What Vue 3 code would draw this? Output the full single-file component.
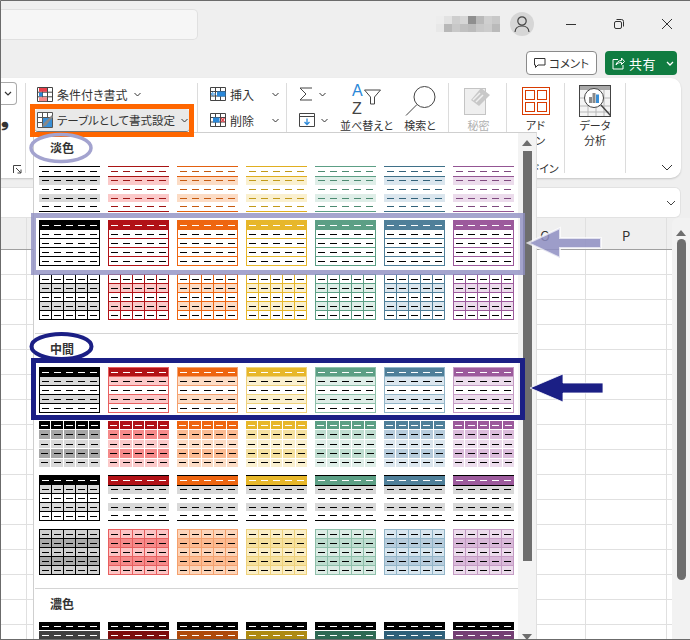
<template>
  <div class="page">
    <!-- タイトルバー -->
    <header class="titlebar">
      <div class="search"></div>
      <div class="user">
        <div class="mosaic">
          <i v-for="(c, i) in mosaic" :key="i" :style="{ background: c }"></i>
        </div>
        <div class="avatar">
          <svg width="16" height="18" viewBox="0 0 16 18" fill="none" stroke="#444" stroke-width="1.2">
            <circle cx="8" cy="6" r="4.2" />
            <path d="M1 17c.3-4 3-6 7-6s6.700 2 7 6" />
          </svg>
        </div>
      </div>
      <div class="winbtns">
        <svg width="12" height="12" viewBox="0 0 12 12" stroke="#333" fill="none"><path d="M1 6.500h10" /></svg>
        <svg width="12" height="12" viewBox="0 0 12 12" stroke="#333" fill="none">
          <rect x="1.500" y="3.500" width="7" height="7" rx="1.500" />
          <path d="M3.500 1.500h5a2 2 0 0 1 2 2v5" />
        </svg>
        <svg width="12" height="12" viewBox="0 0 12 12" stroke="#333" fill="none"><path d="M1 1l10 10M11 1L1 11" /></svg>
      </div>
    </header>

    <div class="actions">
      <button class="comment">
        <svg width="12" height="12" viewBox="0 0 12 12" fill="none" stroke="#333"><path d="M.5 1.500h10.500v6.500H4L1.500 10.500V8h-1z" /></svg>
        <span class="comment-text">コメント</span>
      </button>
      <button class="share">
        <svg width="13" height="13" viewBox="0 0 13 13" fill="none" stroke="#fff"><path d="M6 2.500H1v9.500h10V8M4 8c.5-3 3-4.500 5.500-4.500V1l3 3.500-3 3V5.500C7 5.500 5.200 6.300 4 8z" /></svg>
        <span class="share-text">共有</span>
        <svg class="share-chev" width="8" height="5" viewBox="0 0 8 5" fill="none" stroke="#fff" stroke-width="1.300"><path d="M1 1l3 3 3-3" /></svg>
      </button>
    </div>

    <!-- リボン -->
    <section class="ribbon">
      <div class="group g-font">
        <div class="combo">
          <svg width="8" height="5" viewBox="0 0 8 5" fill="none" stroke="#333" stroke-width="1.200"><path d="M1 1l3 3 3-3" /></svg>
        </div>
        <span class="comma">❟</span>
        <svg class="launcher" width="9" height="9" viewBox="0 0 9 9" fill="none" stroke="#444"><path d="M.5 8V.5H8M3 3l5 5M8 4.500V8H4.500" /></svg>
      </div>

      <div class="group g-style">
        <div class="style-row">
          <svg width="16" height="15" viewBox="0 0 16 15">
            <path d="M.5.500h15v14H.500z M.5 5.200h15M.5 9.800h15M5.500.500v14M10.500.500v14" fill="#fff" stroke="#444" />
            <rect x="2" y="1" width="8" height="3.800" fill="#e8404a" />
            <rect x="2" y="5.600" width="3.500" height="3.800" fill="#2b88d8" />
            <rect x="2" y="10.200" width="8" height="4" fill="#f58a8a" />
          </svg>
          <span>条件付き書式</span>
          <svg class="chev" width="7" height="5" viewBox="0 0 7 5" fill="none" stroke="#333"><path d="M.5 1l3 3 3-3" /></svg>
        </div>
        <div class="style-row active">
          <svg width="16" height="16" viewBox="0 0 16 16">
            <path d="M.5.500h15v15H.500z M.5 5.500h15M.5 10.500h15M5.500.500v15M10.500.500v15" fill="#fff" stroke="#555" />
            <rect x="6" y="6" width="9" height="9" fill="#3a8fd6" />
            <path d="M15 3L7 11l-2 4 4-1.500L16 5z" fill="#888" />
          </svg>
          <span class="table-text">テーブルとして書式設定</span>
          <svg class="chev" width="7" height="5" viewBox="0 0 7 5" fill="none" stroke="#333"><path d="M.5 1l3 3 3-3" /></svg>
        </div>
      </div>

      <div class="group g-cells">
        <div class="cell-row">
          <svg width="16" height="14" viewBox="0 0 16 14">
            <path d="M.5.500h15v13H.500z M.5 4.500h15M.5 9h15M5.500.500v13M10.500.500v13" fill="#fff" stroke="#444" />
            <rect x="7" y="4.500" width="8.500" height="5" fill="#2b88d8" />
            <path d="M6 7H1.500M3.500 4.800L1.200 7l2.300 2.200" fill="none" stroke="#2b88d8" />
          </svg>
          <span>挿入</span>
          <svg class="chev" width="7" height="5" viewBox="0 0 7 5" fill="none" stroke="#333"><path d="M.5 1l3 3 3-3" /></svg>
        </div>
        <div class="cell-row">
          <svg width="16" height="14" viewBox="0 0 16 14">
            <path d="M.5.500h15v13H.500z M.5 4.500h15M.5 9h15M5.500.500v13M10.500.500v13" fill="#fff" stroke="#444" />
            <rect x="3" y="4.500" width="6.500" height="5" fill="#2b88d8" />
            <path d="M11 5l3.500 4M14.500 5L11 9" fill="none" stroke="#e8404a" stroke-width="1.200" />
          </svg>
          <span>削除</span>
          <svg class="chev" width="7" height="5" viewBox="0 0 7 5" fill="none" stroke="#333"><path d="M.5 1l3 3 3-3" /></svg>
        </div>
      </div>

      <div class="group g-edit">
        <div class="edit-small">
          <div class="edit-row">
            <svg width="14" height="14" viewBox="0 0 14 14" fill="none" stroke="#444"><path d="M13 1H1l6 6-6 6h12" /></svg>
            <svg width="7" height="5" viewBox="0 0 7 5" fill="none" stroke="#333"><path d="M.5 1l3 3 3-3" /></svg>
          </div>
          <div class="edit-row">
            <svg width="16" height="14" viewBox="0 0 16 14" fill="none">
              <path d="M.5.500h15v13H.500zM.5 3.500h15" stroke="#444" />
              <path d="M8 5.500v6M5.500 9L8 11.500 10.500 9" stroke="#2b88d8" stroke-width="1.300" />
            </svg>
            <svg width="7" height="5" viewBox="0 0 7 5" fill="none" stroke="#333"><path d="M.5 1l3 3 3-3" /></svg>
          </div>
        </div>
        <div class="big sort">
          <svg width="33" height="32" viewBox="0 0 33 32" fill="none">
            <text x="2" y="13" class="az" fill="#2b88d8">A</text>
            <text x="2" y="31" class="az" fill="#444">Z</text>
            <path d="M14.500 7h16l-6 7v7h-4v-7z" stroke="#444" />
          </svg>
          <span>並べ替えと</span>
        </div>
        <div class="big find">
          <svg width="31" height="30" viewBox="0 0 31 30" fill="none" stroke="#444">
            <circle cx="19.500" cy="11" r="10.500" />
            <path d="M12 18.500L1 29.500" />
          </svg>
          <span>検索と</span>
        </div>
      </div>

      <div class="group g-sens">
        <div class="big muted">
          <svg width="29" height="29" viewBox="0 0 29 29">
            <rect x=".5" y="2.500" width="21" height="26" fill="#efefef" stroke="#c4c4c4" />
            <path d="M17 2l9 7-11 11-8-6z" fill="#c8c8c8" />
            <path d="M9 14l7-7M12 16l7-7" stroke="#efefef" stroke-width="1.500" />
          </svg>
          <span>秘密</span>
        </div>
      </div>

      <div class="group g-addin">
        <div class="big">
          <svg width="28" height="28" viewBox="0 0 28 28" fill="none" stroke="#d83b01">
            <rect x=".5" y=".5" width="27" height="27" />
            <rect x="3.500" y="3.500" width="9" height="9" />
            <rect x="15.500" y="3.500" width="9" height="9" />
            <rect x="3.500" y="15.500" width="9" height="9" />
            <rect x="15.500" y="15.500" width="9" height="9" />
          </svg>
          <span>アド<br />イン</span>
        </div>
        <span class="group-label">アドイン</span>
      </div>

      <div class="group g-data">
        <div class="big">
          <svg width="32" height="32" viewBox="0 0 32 32" fill="none">
            <rect x=".5" y=".5" width="31" height="31" fill="#f4f4f4" stroke="#444" />
            <rect x="1" y="1" width="30" height="4" fill="#a8a8a8" />
            <path d="M1 13h30M1 21h30M1 27h30M9 5v26M17 5v26M25 5v26" stroke="#b8b8b8" />
            <circle cx="15" cy="13" r="9.500" fill="#fff" stroke="#444" />
            <rect x="10" y="12" width="3" height="6" fill="#8a8a8a" />
            <rect x="13.500" y="8" width="3" height="10" fill="#8a8a8a" />
            <rect x="17" y="9.500" width="3" height="8.500" fill="#3a8fd6" />
            <path d="M22 20l9.500 10.500" stroke="#444" stroke-width="1.500" />
          </svg>
          <span>データ<br />分析</span>
        </div>
      </div>

      <div class="collapse">
        <svg width="12" height="7" viewBox="0 0 12 7" fill="none" stroke="#333"><path d="M1 1l5 5 5-5" /></svg>
      </div>
    </section>

    <!-- 数式バー -->
    <div class="formula">
      <svg width="10" height="6" viewBox="0 0 10 6" fill="none" stroke="#444"><path d="M1 1l4 4 4-4" /></svg>
    </div>

    <!-- シート -->
    <div class="sheet">
      <div class="grid-area">
        <div class="col-head">
          <div class="ch ch-a"></div>
          <div class="ch ch-rest"></div>
          <div class="ch ch-o">O</div>
          <div class="ch ch-p">P</div>
        </div>
        <div class="cells">
          <div class="col ch-a"></div>
          <div class="col ch-rest"></div>
          <div class="col ch-o"></div>
          <div class="col ch-p"></div>
        </div>
      </div>
      <div class="vscroll">
        <i class="tri-up"></i>
        <div class="vthumb"></div>
      </div>
    </div>

    <!-- テーブルスタイルのギャラリー -->
    <div class="panel">
      <div class="gallery">
        <div v-for="sec in sections" :key="sec.title" class="sec">
          <div class="sec-title">{{ sec.title }}</div>
          <div class="thumbs">
            <template v-for="type in sec.types" :key="type">
              <div
                v-for="(p, i) in palette"
                :key="type + i"
                class="thumb"
                :class="[type, i === 0 ? 'first' : '']"
                :style="vars(p)"
              >
                <div v-for="r in 5" :key="r" class="row">
                  <div v-for="c in 5" :key="c" class="cell"><b></b></div>
                </div>
              </div>
            </template>
          </div>
        </div>
      </div>
      <div class="pscroll">
        <i class="tri-up"></i>
        <div class="pthumb"></div>
        <i class="tri-down"></i>
      </div>
    </div>

    <!-- 注釈 -->
    <svg class="notes" width="690" height="640" viewBox="0 0 690 640" fill="none">
      <path d="M.5 640V.5H690M0 639.500h690" stroke="#6b6b6b" />
      <rect x="32.500" y="106.500" width="159" height="28" stroke="#ff6600" stroke-width="5" />
      <ellipse cx="61" cy="148" rx="30" ry="13.500" stroke="#a3a3cf" stroke-width="3.500" />
      <rect x="33.500" y="215.500" width="489" height="57" stroke="#8e8ec2" stroke-opacity=".8" stroke-width="5" />
      <path d="M528 243l32-15v10h41v10h-41v10z" fill="#8e8ec2" fill-opacity=".85" stroke="#fff" stroke-opacity=".7" stroke-width="2" />
      <ellipse cx="61.500" cy="346.500" rx="30" ry="12.500" stroke="#1b1f85" stroke-width="4" />
      <rect x="33.500" y="360.500" width="489" height="57" stroke="#1b1f85" stroke-width="5" />
      <path d="M530 388l33-14v9h40v10h-40v9z" fill="#1b1f85" stroke="#fff" stroke-opacity=".8" />
    </svg>
  </div>
</template>

<script setup>
// 上段・下段のモザイク（ユーザー名のぼかし）
const mosaic = [
  "#ededed", "#e2e2e2", "#cecece", "#d6d6d6", "#8f8f8f", "#b9b9b9", "#cfcfcf", "#c8c8c8",
  "#e8e8e8", "#b8b8b8", "#c8c8c8", "#c0c0c0", "#bbbbbb", "#c8c8c8", "#cccccc", "#bababa",
];

const palette = [
  { accent: "#000000", line: "#000000", dash: "#000000", edge: "#000000", soft: "#d9d9d9", mid: "#a6a6a6", pale: "#d0d0d0", deep: "#aaaaaa", dark: "#404040" },
  { accent: "#b11116", line: "#a81414", dash: "#9e1414", edge: "#e85f5f", soft: "#fbc9c9", mid: "#f58a8a", pale: "#fcc4c4", deep: "#f58a8a", dark: "#7c0c0c" },
  { accent: "#ee6510", line: "#e2600f", dash: "#c65a10", edge: "#f5a16e", soft: "#fcdcc5", mid: "#fbbb92", pale: "#fcd5ba", deep: "#fbbb92", dark: "#ae4a0b" },
  { accent: "#e7b72a", line: "#e0ae20", dash: "#c29a1a", edge: "#efd27c", soft: "#faf0cf", mid: "#f5e1a0", pale: "#faeec6", deep: "#f5e1a0", dark: "#ad8a12" },
  { accent: "#5c9f85", line: "#5c9f85", dash: "#4d8b72", edge: "#8fc0ab", soft: "#dfeee8", mid: "#bfddd0", pale: "#dcece5", deep: "#bfddd0", dark: "#2f6a54" },
  { accent: "#4f7f99", line: "#3f7088", dash: "#33627a", edge: "#93b6c9", soft: "#dbe6ee", mid: "#b7ccdc", pale: "#d8e6ef", deep: "#b7ccdc", dark: "#2f6079" },
  { accent: "#9c5a9c", line: "#935593", dash: "#7f4a7f", edge: "#c59cc5", soft: "#ecdcec", mid: "#dbbcdb", pale: "#ecdcec", deep: "#d9b9d9", dark: "#743f74" },
];

const sections = [
  { title: "淡色", types: ["light1", "light2", "light3"] },
  { title: "中間", types: ["med1", "med2", "med3", "med4"] },
  { title: "濃色", types: ["dark1"] },
];

const vars = (p) => ({
  "--accent": p.accent,
  "--line": p.line,
  "--dash": p.dash,
  "--edge": p.edge,
  "--soft": p.soft,
  "--mid": p.mid,
  "--pale": p.pale,
  "--deep": p.deep,
  "--dark": p.dark,
});
</script>

<style>
html,
body {
  margin: 0;
  background: #efefef;
}
</style>

<style scoped>
.page {
  position: relative;
  width: 690px;
  height: 640px;
  overflow: hidden;
  background: #efefef;
  color: #333;
  font-family: "Noto Sans CJK JP", "Liberation Sans", sans-serif;
  font-size: 12px;
  line-height: 15px;
  font-feature-settings: "palt";
  white-space: nowrap;
}

/* タイトルバー */
.titlebar {
  display: flex;
  align-items: center;
  height: 47px;
}
.search {
  width: 198px;
  height: 31px;
  margin-top: 2px;
  box-sizing: border-box;
  background: #f6f6f6;
  border: 1px solid #e0e0e0;
  border-left: 0;
  border-radius: 0 5px 5px 0;
}
.user {
  display: flex;
  align-items: center;
  margin-left: 238px;
}
.mosaic {
  display: grid;
  grid-template-columns: repeat(8, 8px);
  grid-auto-rows: 8px;
  margin-top: 1px;
}
.avatar {
  display: flex;
  align-items: center;
  justify-content: center;
  width: 24px;
  height: 24px;
  margin-left: 10px;
  border-radius: 50%;
  background: #d6d6d6;
}
.winbtns {
  display: flex;
  gap: 36px;
  margin-left: 31px;
}

.actions {
  display: flex;
  justify-content: flex-end;
  gap: 8px;
  height: 31px;
  padding: 4px 13px 0 0;
  box-sizing: border-box;
}
.actions button {
  display: flex;
  align-items: center;
  height: 24px;
  padding: 0;
  box-sizing: border-box;
  border-radius: 4px;
  font: inherit;
  font-feature-settings: "palt";
}
.comment {
  width: 71px;
  gap: 3px;
  padding-left: 7px !important;
  background: #fff;
  border: 1px solid #8a8a8a;
  color: #333;
}
.comment-text {
  font-size: 11.5px;
}
.share {
  width: 72px;
  padding-left: 7px !important;
  background: #107c41;
  border: 0;
  color: #fff;
}
.share-text {
  margin-left: 4px;
  font-size: 13px;
  letter-spacing: 0.5px;
}
.share-chev {
  margin-left: 10px;
}

/* リボン */
.ribbon {
  display: flex;
  height: 100px;
  margin-right: 9px;
  padding-top: 5px;
  box-sizing: border-box;
  background: #fff;
  border-radius: 0 10px 10px 0;
  box-shadow: 0 1px 2px rgba(0, 0, 0, 0.18);
}
.group {
  position: relative;
  flex: none;
  box-sizing: border-box;
  height: 90px;
  border-right: 1px solid #dcdcdc;
}
.g-font {
  width: 26px;
}
.combo {
  display: flex;
  align-items: center;
  justify-content: flex-end;
  width: 17px;
  height: 23px;
  margin-top: -1px;
  padding-right: 4px;
  box-sizing: border-box;
  background: #fff;
  border: 1px solid #aaa;
  border-left: 0;
  border-radius: 0 4px 4px 0;
}
.comma {
  display: block;
  margin: 3px 0 0 1px;
  font-size: 20px;
  line-height: 20px;
  font-weight: 700;
  color: #333;
}
.launcher {
  position: absolute;
  left: 13px;
  top: 82px;
}

.g-style {
  width: 172px;
  padding: 0 8px 0 9px;
}
.style-row {
  display: flex;
  align-items: center;
  gap: 4px;
  height: 23px;
  padding-left: 2px;
}
.style-row.active {
  margin-top: 3px;
  box-sizing: border-box;
  background: #e9e9e9;
  border-radius: 3px;
  border-bottom: 1px solid #777;
}
.table-text {
  font-size: 11.5px;
}
.chev {
  margin-left: 2px;
}

.g-cells {
  display: flex;
  flex-direction: column;
  gap: 4px;
  width: 89px;
  padding-left: 12px;
}
.cell-row {
  display: flex;
  align-items: center;
  gap: 4px;
  height: 22px;
}
.cell-row .chev {
  margin-left: 14px;
}

.g-edit {
  display: flex;
  width: 162px;
}
.edit-small {
  display: flex;
  flex-direction: column;
  gap: 4px;
  width: 50px;
  padding-left: 12px;
  box-sizing: border-box;
}
.edit-row {
  display: flex;
  align-items: center;
  gap: 6px;
  height: 22px;
}
.big {
  display: flex;
  flex-direction: column;
  align-items: center;
  text-align: center;
}
.big span {
  display: block;
  margin-top: 3px;
  font-size: 11px;
}
.sort {
  width: 51px;
  flex: none;
  margin-left: 4px;
}
.find {
  width: 46px;
  flex: none;
  margin-left: 5px;
  padding-top: 3px;
}
.find span {
  margin-top: 2px;
}
.az {
  font-family: "Liberation Sans", sans-serif;
  font-size: 16px;
}
.g-sens {
  width: 58px;
}
.g-sens .big {
  padding: 3px 0 0 2px;
}
.muted {
  color: #b0b0b0;
}
.g-addin {
  width: 58px;
}
.g-addin .big {
  padding-top: 4px;
}
.group-label {
  position: absolute;
  left: 8px;
  right: 0;
  top: 78px;
  text-align: center;
  font-size: 11px;
}
.g-data {
  width: 61px;
}
.g-data .big {
  padding-top: 2px;
}
.g-data .big span {
  margin-top: 1px;
}
.collapse {
  flex: 1;
  display: flex;
  justify-content: flex-end;
  align-items: flex-end;
  padding: 0 8px 7px 0;
}

/* 数式バー */
.formula {
  display: flex;
  align-items: center;
  justify-content: flex-end;
  height: 31px;
  margin: 9px 9px 0 0;
  padding-right: 4px;
  box-sizing: border-box;
  background: #fff;
  border: 1px solid #e2e2e2;
  border-left: 0;
  border-radius: 0 6px 6px 0;
}

/* シート */
.sheet {
  display: flex;
  height: 422px;
}
.grid-area {
  width: 672px;
  flex: none;
}
.col-head {
  display: flex;
  height: 32px;
  box-sizing: border-box;
  background: #efefef;
  border-bottom: 1px solid #a0a0a0;
}
.ch {
  display: flex;
  align-items: center;
  justify-content: center;
  box-sizing: border-box;
  padding-top: 3px;
  font-size: 13px;
  border-right: 1px solid #e0e0e0;
}
.cells {
  display: flex;
  height: 390px;
  background: #fff repeating-linear-gradient(to bottom, transparent 0, transparent 24px, #e0e0e0 24px, #e0e0e0 25px);
}
.col {
  box-sizing: border-box;
  border-right: 1px solid #e0e0e0;
}
.ch-a {
  width: 27px;
}
.ch-rest {
  width: 478px;
}
.ch-o {
  width: 81px;
}
.ch-p {
  width: 81px;
}
.vscroll {
  flex: 1;
  display: flex;
  flex-direction: column;
  align-items: center;
  background: #f2f2f2;
  padding-top: 12px;
  border-radius: 6px 0 0 0;
}
.tri-up {
  width: 0;
  height: 0;
  border-left: 5px solid transparent;
  border-right: 5px solid transparent;
  border-bottom: 6px solid #6e6e6e;
}
.tri-down {
  width: 0;
  height: 0;
  border-left: 5px solid transparent;
  border-right: 5px solid transparent;
  border-top: 6px solid #6e6e6e;
}
.vthumb {
  width: 9px;
  height: 341px;
  margin-top: 3px;
  background: #6e6e6e;
  border-radius: 5px;
}

/* ギャラリー */
.panel {
  position: absolute;
  left: 33px;
  top: 132px;
  display: flex;
  width: 504px;
  height: 508px;
  box-sizing: border-box;
  background: #fff;
  border: 1px solid #cfcfcf;
  border-right-color: #e0e0e0;
  border-bottom: 0;
}
.gallery {
  flex: 1;
  overflow: hidden;
}
.sec {
  margin-left: 1px;
  padding: 0 0 13px 4px;
  border-bottom: 1px solid #d4d4d4;
}
.sec:last-child {
  border-bottom: 0;
}
.sec-title {
  height: 33px;
  padding: 0 0 4px 11px;
  box-sizing: border-box;
  display: flex;
  align-items: center;
  font-size: 12px;
  font-weight: 700;
  color: #333;
}
.thumbs {
  display: grid;
  grid-template-columns: repeat(7, 61px);
  column-gap: 8px;
  row-gap: 8px;
}
.pscroll {
  flex: none;
  width: 18px;
  display: flex;
  flex-direction: column;
  align-items: center;
  background: #f3f3f3;
  padding-top: 7px;
  box-sizing: border-box;
}
.pthumb {
  width: 9px;
  height: 411px;
  margin-top: 5px;
  background: #6e6e6e;
}
.pscroll .tri-down {
  margin-top: 73px;
}

/* テーブルのサムネイル */
.thumb {
  display: flex;
  flex-direction: column;
  height: 46px;
  box-sizing: border-box;
  background: #fff;
}
.row {
  flex: 1;
  display: flex;
  min-height: 0;
}
.cell {
  flex: 1;
  display: flex;
  align-items: center;
  justify-content: center;
  min-width: 0;
}
.cell b {
  display: block;
  width: 7px;
  height: 1px;
  background: #000;
}

.light1 {
  border-top: 1px solid var(--line);
  border-bottom: 1px solid var(--line);
}
.light1 .row:nth-child(1) {
  border-bottom: 1px solid var(--line);
}
.light1 .row:nth-child(2),
.light1 .row:nth-child(4) {
  background: var(--soft);
}
.light1 .cell b {
  background: var(--dash);
}

.light2 {
  border: 1px solid var(--accent);
}
.light2 .row + .row {
  border-top: 1px solid var(--accent);
}
.light2 .row:first-child {
  background: var(--accent);
}
.light2 .row:first-child b,
.med1 .row:first-child b,
.med2 .row:first-child b,
.med3 .row:first-child b,
.dark1 .row:nth-child(-n + 2) b {
  background: #fff;
}

.light3 {
  border: 1px solid var(--accent);
}
.light3 .row + .row,
.med3.first .row + .row {
  border-top: 1px solid var(--accent);
}
.light3 .cell + .cell,
.med3.first .cell + .cell {
  border-left: 1px solid var(--accent);
}
.light3 .row:nth-child(even) {
  background: var(--soft);
}

.med1 {
  border: 1px solid var(--edge);
}
.med1 .row + .row {
  border-top: 1px solid var(--edge);
}
.med1 .row:first-child {
  background: var(--accent);
}
.med1 .row:nth-child(even) {
  background: var(--soft);
}

.med2 {
  gap: 1px;
}
.med2 .row {
  gap: 1px;
}
.med2 .cell {
  background: var(--soft);
}
.med2 .row:nth-child(even) .cell {
  background: var(--mid);
}
.med2 .row:first-child .cell {
  background: var(--accent);
}

.med3 {
  border-top: 1px solid #000;
  border-bottom: 1px solid #000;
}
.med3 .row:first-child {
  background: var(--accent);
  border-bottom: 1px solid #000;
}
.med3 .row:nth-child(even) {
  background: #d9d9d9;
}
.med3.first {
  border: 1px solid #000;
}
.med3.first .row:first-child {
  border-bottom: 0;
}

.med4 {
  border: 1px solid var(--edge);
  background: var(--pale);
}
.med4 .row + .row {
  border-top: 1px solid var(--edge);
}
.med4 .cell + .cell {
  border-left: 1px solid var(--edge);
}
.med4 .row:nth-child(even) {
  background: var(--deep);
}

.dark1 {
  gap: 1px;
}
.dark1 .row:first-child {
  background: #000;
}
.dark1 .row:nth-child(2) {
  background: var(--dark);
}

/* 注釈レイヤー */
.notes {
  position: absolute;
  left: 0;
  top: 0;
  pointer-events: none;
}
</style>
